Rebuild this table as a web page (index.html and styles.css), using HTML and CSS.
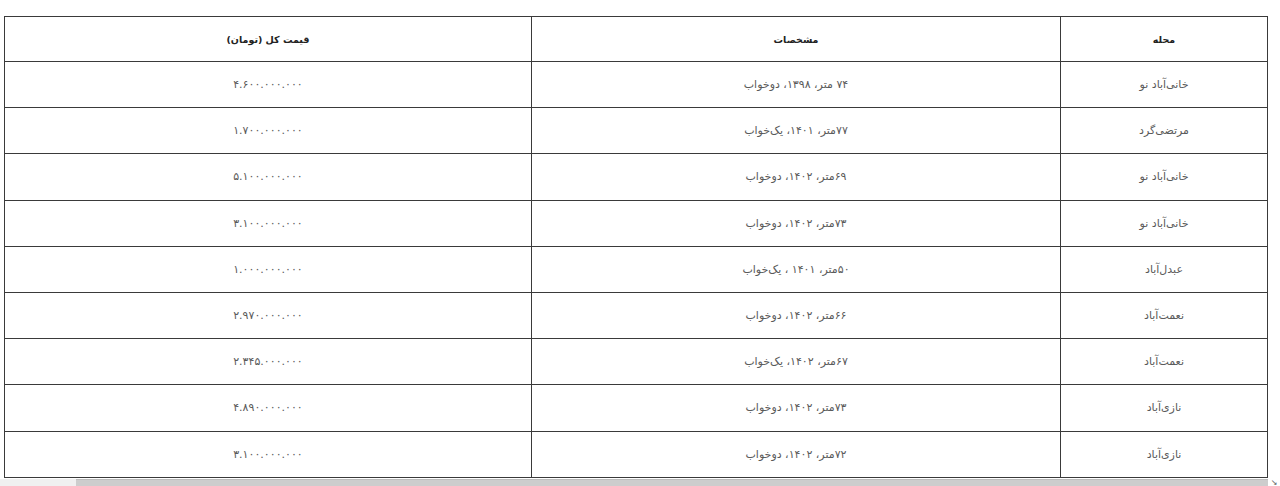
FILE: index.html
```html
<!DOCTYPE html>
<html lang="fa" dir="rtl">
<head>
<meta charset="utf-8">
<link rel="stylesheet" href="styles.css">
</head>
<body>
<div class="page">
  <table class="grid">
    <thead>
      <tr>
        <th class="c-area">محله</th>
        <th class="c-spec">مشخصات</th>
        <th class="c-price">قیمت کل (تومان)</th>
      </tr>
    </thead>
    <tbody>
      <tr><td>خانی‌آباد نو</td><td>۷۴ متر، ۱۳۹۸، دوخواب</td><td>۴.۶۰۰.۰۰۰.۰۰۰</td></tr>
      <tr><td>مرتضی‌گرد</td><td>۷۷متر، ۱۴۰۱، یک‌خواب</td><td>۱.۷۰۰.۰۰۰.۰۰۰</td></tr>
      <tr><td>خانی‌آباد نو</td><td>۶۹متر، ۱۴۰۲، دوخواب</td><td>۵.۱۰۰.۰۰۰.۰۰۰</td></tr>
      <tr><td>خانی‌آباد نو</td><td>۷۳متر، ۱۴۰۲، دوخواب</td><td>۳.۱۰۰.۰۰۰.۰۰۰</td></tr>
      <tr><td>عبدل‌آباد</td><td>۵۰متر، ۱۴۰۱ ، یک‌خواب</td><td>۱.۰۰۰.۰۰۰.۰۰۰</td></tr>
      <tr><td>نعمت‌آباد</td><td>۶۶متر، ۱۴۰۲، دوخواب</td><td>۲.۹۷۰.۰۰۰.۰۰۰</td></tr>
      <tr><td>نعمت‌آباد</td><td>۶۷متر، ۱۴۰۲، یک‌خواب</td><td>۲.۳۴۵.۰۰۰.۰۰۰</td></tr>
      <tr><td>نازی‌آباد</td><td>۷۳متر، ۱۴۰۲، دوخواب</td><td>۴.۸۹۰.۰۰۰.۰۰۰</td></tr>
      <tr><td>نازی‌آباد</td><td>۷۲متر، ۱۴۰۲، دوخواب</td><td>۳.۱۰۰.۰۰۰.۰۰۰</td></tr>
    </tbody>
  </table>
  <div class="hscroll" dir="ltr">
    <div class="track-start"></div>
    <div class="thumb"></div>
    <div class="corner">&#x2198;</div>
  </div>
</div>
</body>
</html>
```
FILE: styles.css
```css
html, body {
  margin: 0;
  padding: 0;
  background: #ffffff;
}
body {
  width: 1280px;
  height: 486px;
  overflow: hidden;
  font-family: "DejaVu Sans", "Noto Sans", sans-serif;
}
.page {
  padding: 16px 12px 0 4px;
  direction: ltr;
}
.grid {
  direction: rtl;
  width: 1264px;
  border-collapse: collapse;
  table-layout: fixed;
  font-size: 11px;
  color: #5a5a5a;
}
.grid th, .grid td {
  border: 1px solid #3a3a3a;
  text-align: center;
  vertical-align: middle;
  padding: 0;
}
.grid th {
  height: 44px;
  font-size: 9.5px;
  font-weight: bold;
  color: #222;
}
.grid td {
  height: 45.2px;
}
.c-area { width: 206px; }
.c-spec { width: 528px; }
.c-price { width: auto; }
.hscroll {
  display: flex;
  height: 8px;
  margin-top: 1px;
  margin-left: -4px;
  width: 1280px;
}
.track-start {
  width: 76px;
  background: #f0f0f0;
}
.thumb {
  flex: 1;
  background: #cdcdcd;
  border-top: 1px solid #bdbdbd;
}
.corner {
  width: 12px;
  font-size: 8px;
  line-height: 8px;
  color: #555;
  text-align: center;
  background: #ffffff;
}
```
